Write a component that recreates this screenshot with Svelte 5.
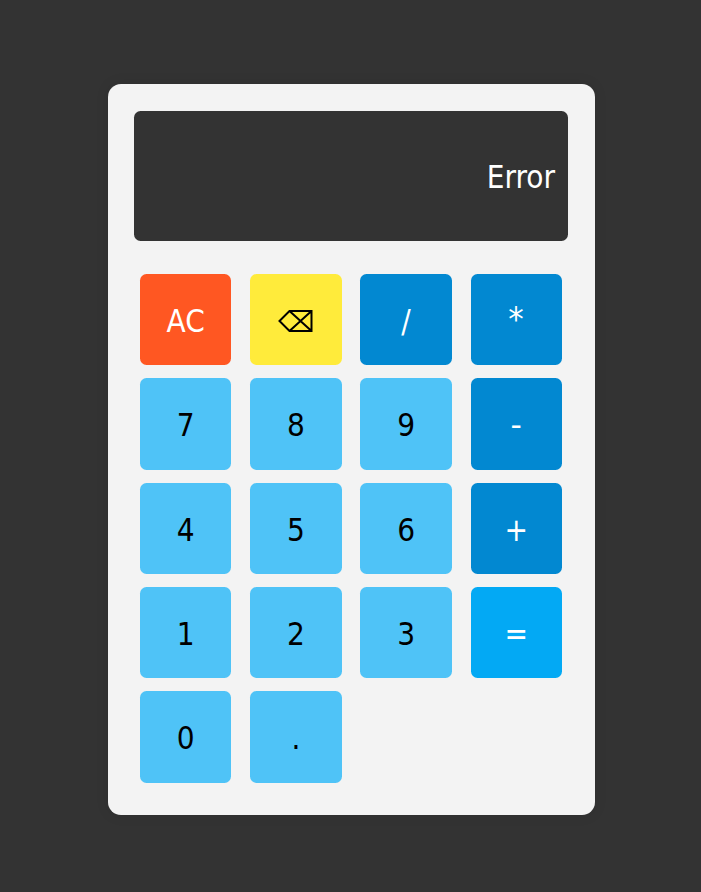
<script>
  const keys = [
    ['AC', 'clear'], ['⌫', 'delete'], ['/', 'operator'], ['*', 'operator times'],
    ['7', ''], ['8', ''], ['9', ''], ['-', 'operator minus'],
    ['4', ''], ['5', ''], ['6', ''], ['+', 'operator'],
    ['1', ''], ['2', ''], ['3', ''], ['=', 'equals'],
    ['0', ''], ['.', '']
  ];
  let display = $state('Error');
  function press(key) {
    if (key === 'AC') display = '';
    else if (key === '⌫') display = display.slice(0, -1);
    else if (key !== '=') display = display === 'Error' ? key : display + key;
  }
</script>

<main>
  <section class="calculator">
    <div class="display"><span>{display}</span></div>
    <div class="keys">
      {#each keys as [label, kind]}
        <button class="key {kind}" onclick={() => press(label)} aria-label={label === '⌫' ? 'Delete' : label}>
          {#if kind === 'delete'}
            <svg width="36" height="24" viewBox="0 0 36 24" fill="none" stroke="#000" stroke-width="2">
              <path d="M1.5 12 11.5 2H33.5V22H11.5ZM11.5 2 33.5 22M33.5 2 11.5 22" />
            </svg>
          {:else}
            <span>{label}</span>
          {/if}
        </button>
      {/each}
    </div>
  </section>
</main>

<style>
  :global(body) { background: #333; }
  main {
    box-sizing: border-box;
    min-height: 892px;
    padding: 84px 0 77px 108px;
    font-family: "DejaVu Sans Condensed", "DejaVu Sans", sans-serif;
    font-stretch: condensed;
  }
  .calculator {
    box-sizing: border-box;
    width: 487px;
    height: 731px;
    padding: 27px 27px 32px 26px;
    border-radius: 13px;
    background: #f3f3f3;
    box-shadow: 0 0 13px rgba(0, 0, 0, .1);
  }
  .display {
    box-sizing: border-box;
    display: flex;
    align-items: center;
    justify-content: flex-end;
    height: 130px;
    padding: 1px 13px 0;
    border-radius: 6.5px;
    background: #333;
    color: #fff;
    font-size: 31.2px;
  }
  .keys {
    display: grid;
    grid-template-columns: repeat(4, 91.5px);
    grid-auto-rows: 91.3px;
    gap: 13px 18.73px;
    margin: 33.1px 0 0 5.9px;
  }
  .key {
    display: flex;
    align-items: center;
    justify-content: center;
    padding: 3px 0 0;
    border: 0;
    border-radius: 6.5px;
    background: #4fc3f7;
    color: #000;
    font: inherit;
    font-size: 31.2px;
    line-height: 1;
  }
  .key span { padding-top: 1px; }
  .clear { background: #ff5722; color: #fff; }
  .delete { background: #ffeb3b; }
  .operator { background: #0288d1; color: #fff; }
  .times span { transform: translateY(-2px) scale(1.1); }
  .minus span { transform: scaleX(1.12); }
  .equals { background: #03a9f4; color: #fff; }
</style>
